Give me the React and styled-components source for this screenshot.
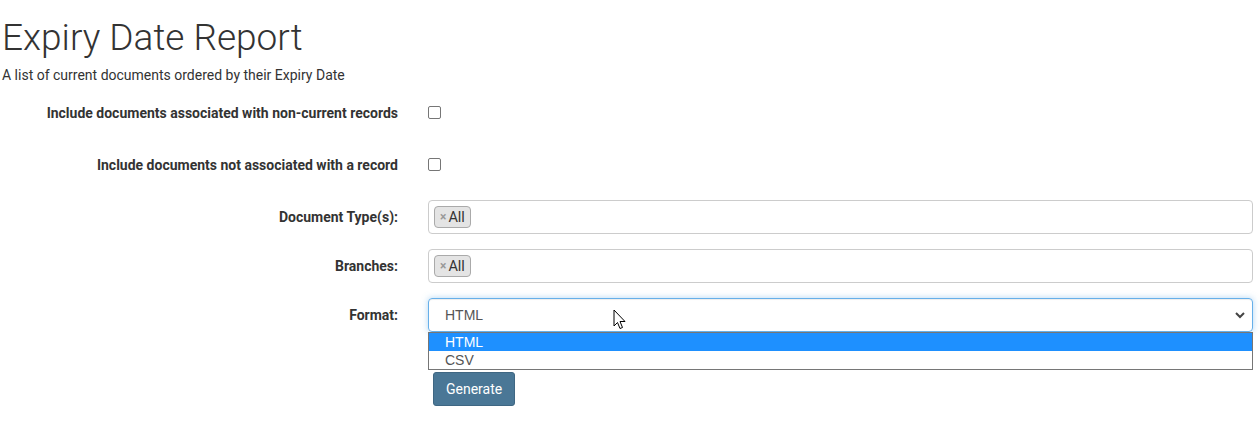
import React from "react";
import styled, { createGlobalStyle } from "styled-components";

const Global = createGlobalStyle`
  html, body { margin: 0; padding: 0; background: #fff; }
  body { font-family: Roboto, "Liberation Sans", sans-serif; color: #333; font-size: 14px; }
  * { box-sizing: border-box; }
`;

const Page = styled.div`
  position: relative;
  width: 1260px;
  height: 429px;
  padding: 0 7px 0 2px;
  overflow: hidden;
`;

const Title = styled.h1`
  margin: 0;
  padding-top: 16px;
  font-family: Roboto, sans-serif;
  font-weight: 300;
  font-size: 37px;
  line-height: 44px;
  color: #333;
`;

const Subtitle = styled.p`
  margin: 5px 0 0;
  font-size: 14px;
  line-height: 20px;
  color: #333;
`;

const Form = styled.div`
  display: grid;
  grid-template-columns: 396px 1fr;
  column-gap: 30px;
  margin-top: 11px;
`;

const Label = styled.label`
  display: flex;
  align-items: center;
  justify-content: flex-end;
  height: ${(p) => p.$h}px;
  font-weight: 700;
  font-size: 14px;
  color: #333;
`;

const Cell = styled.div`
  display: flex;
  align-items: center;
  height: ${(p) => p.$h}px;
  position: relative;
`;

const Box = styled.span`
  display: block;
  width: 13px;
  height: 13px;
  border: 1px solid #767676;
  border-radius: 2px;
  background: #fff;
`;

const MultiInput = styled.div`
  width: 100%;
  height: 34px;
  border: 1px solid #ccc;
  border-radius: 4px;
  display: flex;
  align-items: center;
  padding-left: 5px;
`;

const Chip = styled.span`
  display: inline-flex;
  align-items: center;
  height: 22px;
  padding: 0 5px 0 5px;
  background: #e4e4e4;
  border: 1px solid #aaa;
  border-radius: 4px;
  font-size: 14.5px;
  color: #333;
`;

const ChipX = styled.span`
  color: #999;
  font-size: 12px;
  font-weight: 700;
  margin-right: 2px;
`;

const Select = styled.div`
  width: 100%;
  height: 34px;
  border: 1px solid #66afe9;
  border-radius: 4px;
  box-shadow: inset 0 1px 1px rgba(0,0,0,.075), 0 0 6px rgba(102,175,233,.5);
  display: flex;
  align-items: center;
  justify-content: space-between;
  padding: 0 5px 0 16px;
  font-family: "Liberation Sans", Arial, sans-serif;
  font-size: 14px;
  color: #555;
`;

const DropList = styled.div`
  position: absolute;
  top: 34px;
  left: 0;
  right: 0;
  border: 1px solid #767676;
  background: #fff;
  z-index: 2;
  font-family: "Liberation Sans", Arial, sans-serif;
  font-size: 14px;
`;

const Option = styled.div`
  height: 18px;
  line-height: 18px;
  padding-left: 16px;
  background: ${(p) => (p.$active ? "#1e90ff" : "#fff")};
  color: ${(p) => (p.$active ? "#fff" : "#555")};
`;

const Button = styled.button`
  margin: 40px 0 0 5px;
  height: 34px;
  padding: 0 12px;
  background: #4a7796;
  border: 1px solid #3f6783;
  border-radius: 3px;
  color: #fff;
  font-family: Roboto, sans-serif;
  font-size: 14px;
`;

const Cursor = styled.svg`
  position: absolute;
  left: 613px;
  top: 309px;
  z-index: 5;
`;

const Chevron = () => (
  <svg width="14" height="8" viewBox="0 0 14 8">
    <path d="M3 2 L7 6 L11 2" fill="none" stroke="#444" strokeWidth="2" />
  </svg>
);

export default function App() {
  return (
    <>
      <Global />
      <Page>
        <Title>Expiry Date Report</Title>
        <Subtitle>A list of current documents ordered by their Expiry Date</Subtitle>
        <Form>
          <Label $h={33}>Include documents associated with non-current records</Label>
          <Cell $h={33}><Box /></Cell>
          <Label $h={71}>Include documents not associated with a record</Label>
          <Cell $h={71}><Box /></Cell>
          <Label $h={34}>Document Type(s):</Label>
          <Cell $h={34}>
            <MultiInput><Chip><ChipX>×</ChipX>All</Chip></MultiInput>
          </Cell>
          <Label $h={15} />
          <div />
          <Label $h={34}>Branches:</Label>
          <Cell $h={34}>
            <MultiInput><Chip><ChipX>×</ChipX>All</Chip></MultiInput>
          </Cell>
          <Label $h={15} />
          <div />
          <Label $h={34}>Format:</Label>
          <Cell $h={34}>
            <Select>
              <span>HTML</span>
              <Chevron />
            </Select>
            <DropList>
              <Option $active>HTML</Option>
              <Option>CSV</Option>
            </DropList>
          </Cell>
          <div />
          <div>
            <Button>Generate</Button>
          </div>
        </Form>
        <Cursor width="14" height="22" viewBox="0 0 14 22">
          <path d="M1 1 L1 17 L4.5 13.5 L7 19.5 L9.5 18.5 L7 12.5 L12 12.5 Z" fill="#fff" stroke="#000" strokeWidth="1" strokeLinejoin="round" />
        </Cursor>
      </Page>
    </>
  );
}
